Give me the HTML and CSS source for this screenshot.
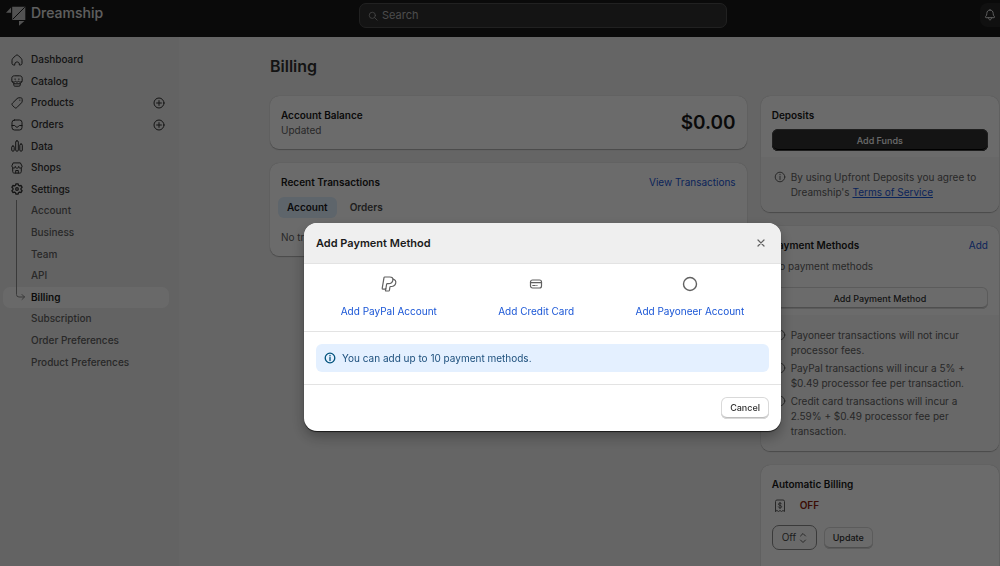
FILE: index.html
```
<!DOCTYPE html>
<html lang="en">
<head>
<meta charset="utf-8">
<meta name="viewport" content="width=device-width, initial-scale=1">
<title>Billing - Dreamship</title>
<link rel="stylesheet" href="styles.css">
</head>
<body>
<svg class="sprite" aria-hidden="true">
  <symbol id="info" viewBox="0 0 12 12"><circle cx="6" cy="6" r="4.8"/><path d="M6 5.4v3.1M6 3.3v.5"/></symbol>
  <symbol id="plus" viewBox="0 0 12 12"><circle cx="6" cy="6" r="5"/><path d="M6 3.6v4.8M3.6 6h4.8"/></symbol>
</svg>

<header class="topbar">
  <a class="brand" href="#">
    <svg class="brand-mark" viewBox="0 0 20 21"><path d="M6 1.700h13.300V15H6zM0 7.700l5.300-5.400v5.400zM13 20.700v-5h5.700z"/><path class="brand-cut" d="M6 15.500h14M5.700 1v15M7 14L18.500 2.500"/></svg>
    <span>Dreamship</span>
  </a>
  <label class="search">
    <svg class="icon" viewBox="0 0 12 12"><circle cx="5.2" cy="5.2" r="3.7"/><path d="M8 8l3 3"/></svg>
    <input type="search" placeholder="Search" aria-label="Search">
  </label>
  <button class="bell" type="button" aria-label="Notifications">
    <svg class="icon" viewBox="0 0 12 12"><path d="M6 1C3.900 1 2.900 2.500 2.800 4.500L2.600 6.200 1.500 7.700c-.3.500 0 1 .6 1h7.800c.6 0 .9-.5.600-1L9.400 6.200 9.200 4.500C9.100 2.500 8.100 1 6 1zM4.500 9c0 2.600 3 2.600 3 0"/></svg>
  </button>
</header>

<div class="shell">
  <nav class="sidebar" aria-label="Main">
    <ul class="nav">
      <li><a href="#"><span class="slot"><svg class="icon" viewBox="0 0 12 12"><path d="M3.700 11H2.700C1.700 11 1 10.300 1 9.300V6.500c0-.8.300-1.500.8-2.100L4.500 1.700c.8-.9 2.200-.9 3 0l2.700 2.700c.5.600.8 1.300.8 2.100v2.800c0 1-.7 1.700-1.700 1.700h-1V10c0-2.800-4.600-2.800-4.600 0z"/></svg></span>Dashboard</a></li>
      <li><a href="#"><span class="slot"><svg class="icon" viewBox="0 0 12 12"><path d="M2.700 8.200C1.300 7.700.8 6.700.8 5.200V3.500C.8 1.700 1.700.8 3.500.8h5c1.800 0 2.700.9 2.700 2.700v1.700c0 1.500-.5 2.500-1.900 3v1.600c0 .9-.5 1.400-1.400 1.400H4.100c-.9 0-1.400-.5-1.400-1.400zM1.200 6.500c1 .9 2.300.8 3.200-.2.900 1 2.300 1 3.200 0 .9 1 2.200 1.100 3.200.2M4.100 3.900v.6M7.900 3.900v.6M3 8.800h6"/></svg></span>Catalog</a></li>
      <li><a href="#"><span class="slot"><svg class="icon" viewBox="0 0 12 12"><path d="M6.300 1.400C6.700 1 7.200.8 7.800.8h1.900c.9 0 1.500.6 1.500 1.500v1.900c0 .6-.2 1.100-.6 1.500l-4.800 4.900c-.6.600-1.500.6-2.100 0L1.400 8.300c-.6-.6-.6-1.500 0-2.100zM8.800 3.100v.2"/></svg></span>Products</a><button type="button" class="add" aria-label="Add product"><svg class="icon"><use href="#plus"/></svg></button></li>
      <li><a href="#"><span class="slot"><svg class="icon" viewBox="0 0 12 12"><rect x="1" y="1" width="10" height="10" rx="2.500"/><path d="M1 6.500h2.500c.5 0 .7.300.9.800.5 1.200 2.700 1.200 3.200 0 .2-.5.400-.8.900-.8H11"/></svg></span>Orders</a><button type="button" class="add" aria-label="Add order"><svg class="icon"><use href="#plus"/></svg></button></li>
      <li><a href="#"><span class="slot"><svg class="icon" viewBox="0 0 12 12"><rect x=".7" y="6" width="2.500" height="5.200" rx="1.200"/><rect x="4.700" y=".8" width="2.600" height="10.400" rx="1.200"/><rect x="8.800" y="4" width="2.500" height="7.200" rx="1.200"/></svg></span>Data</a></li>
      <li><a href="#"><span class="slot"><svg class="icon" viewBox="0 0 12 12"><path d="M1.700 6v3.500c0 1 .6 1.600 1.600 1.600h5.400c1 0 1.600-.6 1.600-1.600V6M2.600.9h6.800l1.700 3.300c0 2.500-3.400 2.500-3.400.2 0 2.400-3.400 2.400-3.400 0 0 2.300-3.400 2.300-3.400-.2zM4.700 11V8.500h2.600V11"/></svg></span>Shops</a></li>
      <li><a href="#"><span class="slot"><svg class="icon bold" viewBox="0 0 12 12"><path d="M5 .8h2l.5 1.500 1 .6 1.600-.4 1 1.800L10 5.400v1.200l1.100 1.100-1 1.800-1.600-.4-1 .6L7 11.200H5l-.5-1.500-1-.6-1.600.4-1-1.800L2 6.600V5.400L.9 4.300l1-1.800 1.600.4 1-.6z"/><circle cx="6" cy="6" r="1.300"/></svg></span>Settings</a>
        <ul class="subnav">
          <li><a href="#"><span class="slot trail"></span>Account</a></li>
          <li><a href="#"><span class="slot trail"></span>Business</a></li>
          <li><a href="#"><span class="slot trail"></span>Team</a></li>
          <li><a href="#"><span class="slot trail"></span>API</a></li>
          <li><a class="current" href="#" aria-current="page"><span class="slot"><svg class="elbow" viewBox="0 0 28 20"><path d="M13.500 0v7.500q0 2.500 2.500 2.500h5.500M19 7.500l2.500 2.500-2.500 2.500"/></svg></span>Billing</a></li>
          <li><a href="#"><span class="slot"></span>Subscription</a></li>
          <li><a href="#"><span class="slot"></span>Order Preferences</a></li>
          <li><a href="#"><span class="slot"></span>Product Preferences</a></li>
        </ul>
      </li>
    </ul>
  </nav>

  <main class="page">
    <h1>Billing</h1>
    <div class="layout">
      <div class="column">
        <section class="card balance">
          <div>
            <h2>Account Balance</h2>
            <p>Updated</p>
          </div>
          <strong class="amount">$0.00</strong>
        </section>
        <section class="card transactions">
          <div class="card-head"><h2>Recent Transactions</h2><a href="#">View Transactions</a></div>
          <div class="tabs" role="tablist">
            <button type="button" role="tab" aria-selected="true" class="tab selected">Account</button>
            <button type="button" role="tab" aria-selected="false" class="tab">Orders</button>
          </div>
          <p>No transactions</p>
        </section>
      </div>

      <div class="column">
        <section class="card">
          <div class="card-body">
            <h2>Deposits</h2>
            <button type="button" class="button primary">Add Funds</button>
          </div>
          <ul class="notes">
            <li><svg class="icon"><use href="#info"/></svg><span>By using Upfront Deposits you agree to Dreamship's <a class="terms" href="#">Terms of Service</a></span></li>
          </ul>
        </section>
        <section class="card">
          <div class="card-body methods">
            <div class="card-head"><h2>Payment Methods</h2><a href="#">Add</a></div>
            <p>No payment methods</p>
            <button type="button" class="button">Add Payment Method</button>
          </div>
          <ul class="notes">
            <li><svg class="icon"><use href="#info"/></svg><span>Payoneer transactions will not incur processor fees.</span></li>
            <li><svg class="icon"><use href="#info"/></svg><span>PayPal transactions will incur a 5% + $0.49 processor fee per transaction.</span></li>
            <li><svg class="icon"><use href="#info"/></svg><span>Credit card transactions will incur a 2.59% + $0.49 processor fee per transaction.</span></li>
          </ul>
        </section>
        <section class="card auto">
          <h2>Automatic Billing</h2>
          <div class="auto-state">
            <svg class="receipt" viewBox="0 0 12 14"><path d="M1.500 12.500v-10q0-1.500 1.500-1.500h6q1.500 0 1.500 1.500v10l-1.500-1-1.500 1-1.500-1-1.500 1-1.500-1zM7.600 4.800C7.200 3.700 4.400 3.700 4.400 5.200c0 1.600 3.300.8 3.300 2.500 0 1.500-3 1.500-3.400.2M6 3.400v6.200"/></svg>
            <strong>OFF</strong>
          </div>
          <form class="auto-form">
            <span class="select">
              <select aria-label="Automatic billing"><option>Off</option><option>On</option></select>
              <svg class="chevrons" viewBox="0 0 8 12"><path d="M1.500 4L4 1.500 6.500 4M1.500 8L4 10.500 6.500 8"/></svg>
            </span>
            <button type="button" class="button">Update</button>
          </form>
        </section>
      </div>
    </div>
  </main>
</div>

<div class="backdrop">
  <div class="modal" role="dialog" aria-modal="true" aria-labelledby="modal-title">
    <div class="modal-head">
      <h2 id="modal-title">Add Payment Method</h2>
      <button type="button" class="close" aria-label="Close"><svg viewBox="0 0 8 8"><path d="M1 1l6 6M7 1L1 7"/></svg></button>
    </div>
    <div class="options">
      <a href="#"><svg class="option-icon" viewBox="0 0 16 16"><path d="M3.800 1h5c2.200 0 3.400 1.100 3.100 3.100-.4 2.500-2 3.600-4.400 3.600H6.300c-.4 0-.6.200-.7.600L4.900 12.500c-.1.400-.3.600-.7.600H1.700c-.4 0-.6-.3-.5-.7L3 1.700c.1-.5.300-.7.800-.7z"/><path d="M12 3.200c2.300.5 3.200 2 2.700 4-.5 2.300-2.100 3.300-4.300 3.300h-.8c-.4 0-.6.200-.7.600l-.5 3.300c-.1.400-.3.600-.7.600H5c-.4 0-.6-.3-.5-.7l.3-1.500"/></svg>Add PayPal Account</a>
      <a href="#"><svg class="option-icon" viewBox="0 0 16 16"><rect x="2.500" y="4" width="11" height="8" rx="2"/><path d="M2.500 6.700h11M4.800 9.500h2.400M8.800 9.500h.2"/></svg>Add Credit Card</a>
      <a href="#"><svg class="option-icon ring" viewBox="0 0 16 16"><circle cx="8" cy="8" r="6.500"/></svg>Add Payoneer Account</a>
    </div>
    <div class="modal-section">
      <p class="banner"><svg class="icon bold"><use href="#info"/></svg>You can add up to 10 payment methods.</p>
    </div>
    <div class="modal-foot"><button type="button" class="button">Cancel</button></div>
  </div>
</div>
</body>
</html>
```
FILE: styles.css
```
* { box-sizing: border-box; }

body {
  margin: 0;
  height: 100vh;
  overflow: hidden;
  background: #f1f1f1;
  color: #303030;
  font: 400 10px/15px Inter, "Liberation Sans", sans-serif;
}

h1, h2, p, ul { margin: 0; padding: 0; }
ul { list-style: none; }
h2 { font-size: 10px; line-height: 15px; font-weight: 600; color: #1a1a1a; }
a { color: #1a56d6; text-decoration: none; }
button, input, select { font: inherit; color: inherit; }
svg { fill: none; stroke: currentColor; stroke-linecap: round; stroke-linejoin: round; flex: none; }

.sprite { display: none; }
.icon { width: 12px; height: 12px; }
.icon.bold { stroke-width: 1.3; }

/* Top bar */
.topbar {
  display: grid;
  grid-template-columns: 1fr 368px 1fr;
  align-items: start;
  height: 37px;
  padding-top: 3px;
  background: #1a1a1a;
  color: #e3e3e3;
}
.brand {
  display: flex;
  align-items: flex-start;
  gap: 5px;
  padding: 2px 0 0 6px;
  color: #e3e3e3;
  font-size: 14px;
  line-height: 16px;
  font-weight: 500;
}
.brand-mark { width: 20px; height: 21px; fill: #c4c4c4; stroke: none; }
.brand-cut { stroke: #1a1a1a; stroke-width: 1; }
.search {
  display: flex;
  align-items: center;
  gap: 4px;
  width: 368px;
  height: 25px;
  margin-left: 43px;
  padding: 0 8px;
  border: 1px solid #4f4f4f;
  border-radius: 7px;
  background: #303030;
}
.search .icon { width: 10px; height: 10px; color: #a6a6a6; }
.search input {
  flex: 1;
  min-width: 0;
  padding: 0;
  border: 0;
  outline: 0;
  background: none;
  font-size: 11px;
}
.search input::placeholder { color: #b5b5b5; }
.bell {
  display: flex;
  align-items: center;
  justify-content: center;
  justify-self: end;
  width: 20px;
  height: 24px;
  padding: 0;
  border: 0;
  border-radius: 8px 0 0 8px;
  background: #272727;
}

/* Navigation */
.shell { display: flex; height: calc(100vh - 37px); }
.sidebar { flex: 0 0 179px; padding: 12px 10px 0 3px; background: #ebebeb; }
.nav { display: grid; grid-auto-rows: 1fr; min-height: 324px; }
.nav > li:last-child, .subnav { display: contents; }
.nav li { display: flex; }
.nav a {
  display: flex;
  flex: 1;
  align-items: center;
  border-radius: 7px;
  color: #303030;
  font-size: 10px;
  font-weight: 500;
}
.nav .subnav a { color: #616161; }
.nav .subnav .current { background: #fafafa; color: #1a1a1a; font-weight: 600; }
.slot { display: flex; align-items: center; justify-content: center; align-self: stretch; width: 28px; }
.slot.trail { background: linear-gradient(#8a8a8a, #8a8a8a) 13px 0 / 1px 100% no-repeat; }
.elbow { width: 28px; height: 20px; color: #8a8a8a; }
.add { display: flex; align-items: center; padding: 0 4px; border: 0; background: none; }

/* Page */
.page { flex: 1; min-width: 0; padding: 19px 1px 0 91px; }
h1 { margin-bottom: 20px; color: #303030; font-size: 16px; line-height: 20px; font-weight: 600; }
.layout { display: grid; grid-template-columns: 2fr 1fr; gap: 14px; align-items: start; }
.column { display: grid; gap: 14px; min-width: 0; }
.card {
  overflow: hidden;
  border-radius: 9px;
  background: #fff;
  color: #616161;
  box-shadow: 0 1px 1px #b0b0b0, 0 0 1px #b0b0b0;
}
.card-head { display: flex; justify-content: space-between; }
.card-body { display: grid; padding: 12px 11px 6px; gap: 6px; }
.methods .button { margin-top: 7px; }

.balance { display: flex; align-items: center; justify-content: space-between; padding: 12px 11px 11px; }
.amount { color: #1a1a1a; font-size: 19px; line-height: 24px; font-weight: 600; }

.transactions { display: grid; gap: 7px; padding: 12px 11px 11px; }
.tabs { display: flex; gap: 4px; margin: 0 -3px 5px; }
.tab { padding: 3px 9px; border: 0; border-radius: 6px; background: none; color: #4a4a4a; font-weight: 600; }
.tab.selected { background: #e0f0ff; color: #1a1a1a; }

.button {
  min-height: 22px;
  padding: 3px 9px;
  border: 0;
  border-radius: 6px;
  background: #fff;
  color: #303030;
  font-size: 9px;
  font-weight: 500;
  box-shadow: inset 0 0 0 1px #d9d9d9, inset 0 -2px 0 #bdbdbd;
}
.button.primary {
  background: #303030;
  color: #fff;
  box-shadow: inset 0 0 0 1px #4a4a4a, inset 0 -2px 0 #000;
}

.notes { display: grid; gap: 3px; padding: 13px 11px 12px; background: #f7f7f7; }
.notes li { display: flex; gap: 5px; padding-left: 2px; }
.notes .icon { margin-top: 1px; }
.terms { text-decoration: underline; }

.auto { padding: 12px 11px; min-height: 120px; }
.auto-state { display: flex; align-items: center; gap: 14px; margin: 6px 0 12px; padding-left: 2px; }
.auto-state strong { color: #8e1f0b; font-weight: 600; }
.receipt { width: 12px; height: 14px; }
.auto-form { display: flex; align-items: center; gap: 7px; }
.select { display: grid; grid-template-columns: 1fr; align-items: center; }
.select select, .chevrons { grid-area: 1 / 1; }
.select select {
  width: 45px;
  height: 25px;
  padding: 0 9px;
  appearance: none;
  border: 1px solid #8a8a8a;
  border-radius: 7px;
  background: #fdfdfd;
  color: #4a4a4a;
}
.chevrons { width: 8px; height: 12px; justify-self: end; margin-right: 10px; pointer-events: none; }

/* Dialog */
.backdrop {
  position: fixed;
  inset: 0;
  display: flex;
  align-items: center;
  justify-content: center;
  padding: 87px 0 0 85px;
  background: rgba(0, 0, 0, .58);
}
.modal {
  width: 100%;
  max-width: 477px;
  overflow: hidden;
  border-radius: 13px;
  background: #fff;
  box-shadow: 0 1px 1px rgba(0, 0, 0, .7), 0 6px 14px rgba(0, 0, 0, .3);
}
.modal-head {
  display: flex;
  align-items: center;
  justify-content: space-between;
  padding: 12px;
  border-bottom: 1px solid #e3e3e3;
  background: #efefef;
}
.modal-head h2 { font-size: 11px; line-height: 16px; }
.close { display: flex; padding: 4px; border: 0; background: none; color: #616161; }
.close svg { width: 8px; height: 8px; stroke-width: 1.2; }
.options { display: flex; justify-content: space-around; padding: 12px 6px; border-bottom: 1px solid #e3e3e3; }
.options a { display: grid; justify-items: center; gap: 12px; }
.option-icon { width: 16px; height: 16px; color: #616161; stroke-width: 1.2; }
.option-icon.ring { stroke-width: 1.4; }
.modal-section { padding: 12px; border-bottom: 1px solid #e3e3e3; }
.banner {
  display: flex;
  align-items: center;
  gap: 6px;
  padding: 6px 8px;
  border: 0;
  border-radius: 6px;
  background: #e4f0ff;
  color: #1c4f7c;
  line-height: 16px;
}
.banner .icon { color: #00527c; }
.modal-foot { display: flex; justify-content: flex-end; padding: 12px; }
```
